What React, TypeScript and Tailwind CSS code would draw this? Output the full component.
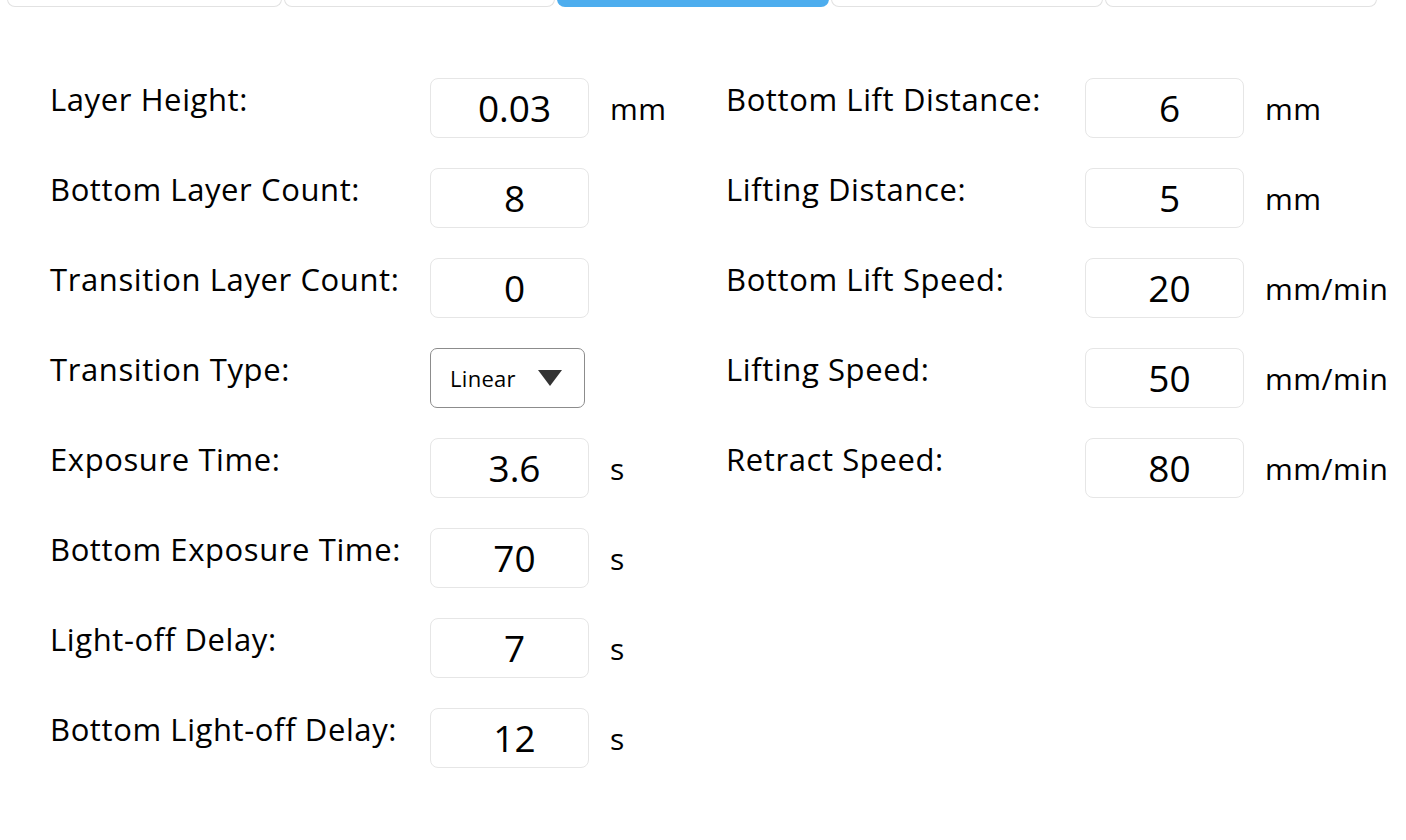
const leftRows = [
  { label: "Layer Height:", value: "0.03", unit: "mm" },
  { label: "Bottom Layer Count:", value: "8", unit: "" },
  { label: "Transition Layer Count:", value: "0", unit: "" },
  { label: "Transition Type:", value: "select", unit: "" },
  { label: "Exposure Time:", value: "3.6", unit: "s" },
  { label: "Bottom Exposure Time:", value: "70", unit: "s" },
  { label: "Light-off Delay:", value: "7", unit: "s" },
  { label: "Bottom Light-off Delay:", value: "12", unit: "s" },
];

const rightRows = [
  { label: "Bottom Lift Distance:", value: "6", unit: "mm" },
  { label: "Lifting Distance:", value: "5", unit: "mm" },
  { label: "Bottom Lift Speed:", value: "20", unit: "mm/min" },
  { label: "Lifting Speed:", value: "50", unit: "mm/min" },
  { label: "Retract Speed:", value: "80", unit: "mm/min" },
];

type Row = { label: string; value: string; unit: string };

function SelectBox() {
  return (
    <div className="w-[155px] h-[60px] border border-[#8c8c8c] rounded-[7px] flex items-center pl-[19px] pr-[22px] justify-between">
      <span className="text-[22px] tracking-[0.3px] text-black">Linear</span>
      <svg width="24" height="16" viewBox="0 0 24 16">
        <path d="M0 0 L24 0 L12 16 Z" fill="#333333" />
      </svg>
    </div>
  );
}

function FieldRow({ row, labelWidth }: { row: Row; labelWidth: string }) {
  return (
    <div className="flex items-start h-[90px]">
      <div className={`${labelWidth} text-[31px] leading-[40px] mt-[1px] tracking-[0.6px] text-black whitespace-nowrap`}>
        {row.label}
      </div>
      {row.value === "select" ? (
        <SelectBox />
      ) : (
        <div className="w-[159px] h-[60px] border border-[#e6e6e6] rounded-[8px] flex items-center justify-center pl-[10px] text-[37px] text-black">
          {row.value}
        </div>
      )}
      {row.unit && (
        <div className="h-[60px] flex items-center ml-[21px] text-[30px] tracking-[0.5px] text-black">{row.unit}</div>
      )}
    </div>
  );
}

export default function App() {
  return (
    <div className="w-[1406px] h-[840px] bg-white overflow-hidden" style={{ fontFamily: '"Open Sans", "Noto Sans", sans-serif' }}>
      {/* tab strip, only its bottom edge is visible */}
      <div className="flex gap-[2px] pl-[7px] h-[8px] -mt-[1px]">
        <div className="w-[275px] border-x border-b border-[#e2e2e2] rounded-b-[8px]" />
        <div className="w-[271px] border-x border-b border-[#e2e2e2] rounded-b-[8px]" />
        <div className="w-[272px] bg-[#4dadee] rounded-b-[8px]" />
        <div className="w-[272px] border-x border-b border-[#e2e2e2] rounded-b-[8px]" />
        <div className="w-[272px] border-x border-b border-[#e2e2e2] rounded-b-[8px]" />
      </div>

      <div className="flex pt-[71px] pl-[50px]">
        <div className="w-[676px] flex flex-col">
          {leftRows.map((r) => (
            <FieldRow key={r.label} row={r} labelWidth="w-[380px]" />
          ))}
        </div>
        <div className="flex flex-col">
          {rightRows.map((r) => (
            <FieldRow key={r.label} row={r} labelWidth="w-[359px]" />
          ))}
        </div>
      </div>
    </div>
  );
}
